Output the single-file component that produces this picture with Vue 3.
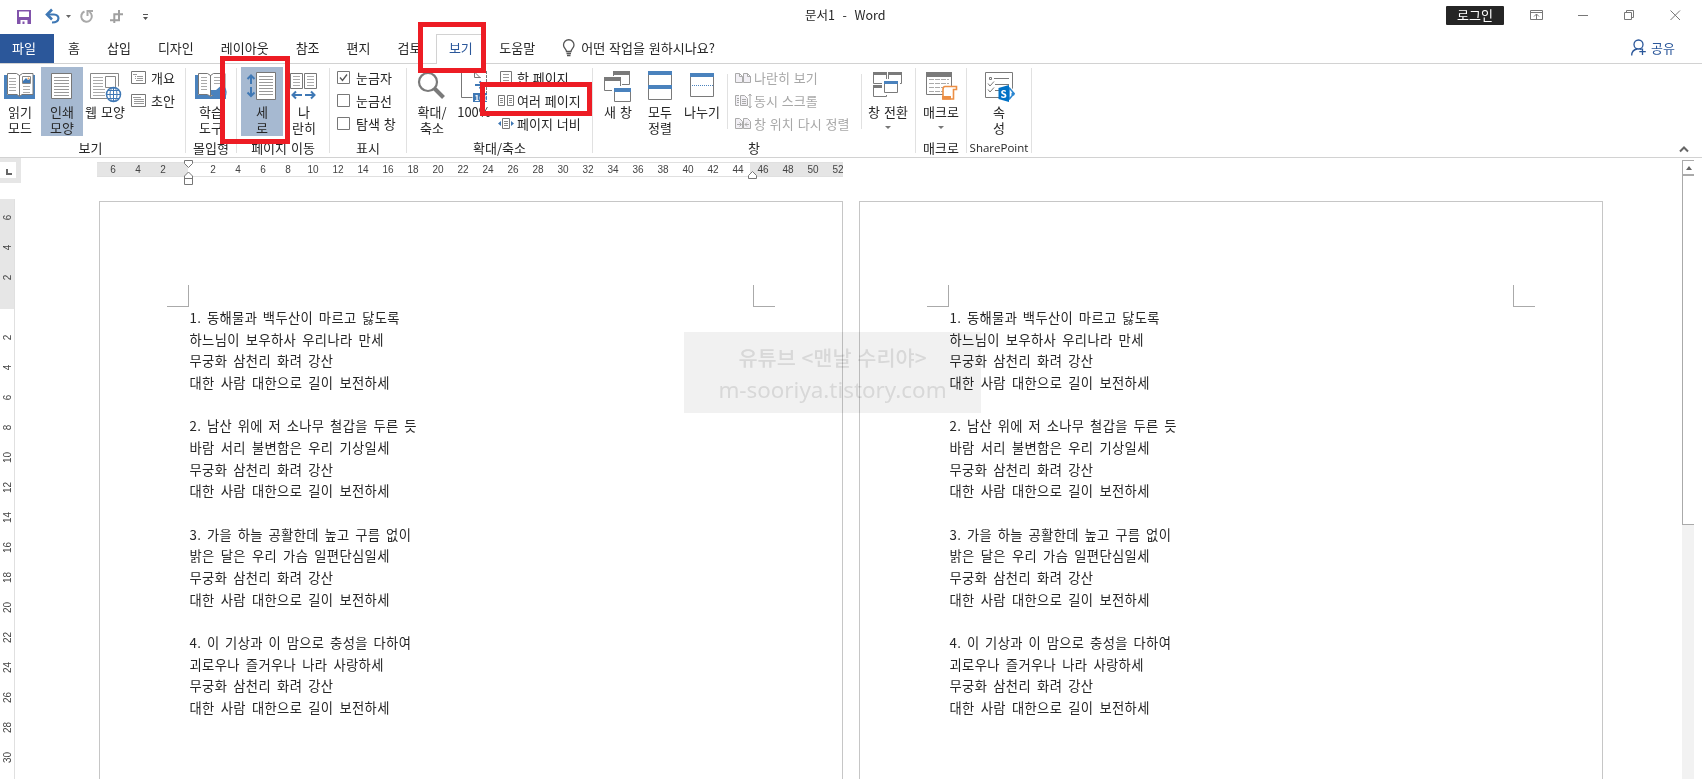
<template>
  <div class="word">
    <header class="titlebar">
      <div class="quick-access">
        <svg width="160" height="31" viewBox="0 0 160 31">
          <path d="M17 10h14v14h-14z" fill="#8153ab" />
          <path d="M19 11.500h10v5.500h-10zM20.500 20h7v4h-7z" fill="#fff" />
          <path d="M22.500 21.500h2v2.500h-2z" fill="#8153ab" />
          <path d="M48 14.500h6c6 0 6.500 8-2 8" fill="none" stroke="#3f78b5" stroke-width="2.200" />
          <path d="M52 9.500l-5 5 5 5" fill="none" stroke="#3f78b5" stroke-width="2.600" />
          <path d="M66 15h5l-2.500 3z" fill="#666" />
          <path d="M84.500 11.500a5.300 5.300 0 1 0 5 0.500M87.500 16v-5h5.500" fill="none" stroke="#a9a9a9" stroke-width="2" />
          <path d="M119 10v11M113.300 14.300h9.700M110 20.200h10M114.300 14v9" fill="none" stroke="#a0a0a0" stroke-width="2" />
          <path d="M143 14h5v1h-5zM143 17h5l-2.500 3z" fill="#555" />
        </svg>
      </div>
      <div class="doc-title">{{ title }}</div>
      <div class="login">로그인</div>
      <svg class="window-controls" width="198" height="31" viewBox="1504 0 198 31" fill="none" stroke="#777">
        <path d="M1530.500 10.500h12v9h-12zM1530 12.500h13M1536.500 19v-5M1534 16.500l2.500-2.500 2.500 2.500" />
        <path d="M1578 15.500h10" />
        <path d="M1624.500 12.500h7v7h-7zM1626.500 12v-1.500h7v7h-2" />
        <path d="M1670.500 10.500l9.500 9.500M1680 10.500l-9.500 9.500" />
      </svg>
    </header>

    <nav class="tabs">
      <span class="file-tab">파일</span>
      <span v-for="tab in tabs" :key="tab" class="tab" :class="{ active: tab === '보기' }">{{ tab }}</span>
      <span class="tell-me">
        <svg width="14" height="18" viewBox="0 0 14 18" fill="none" stroke="#555" stroke-width="1.300">
          <path d="M4.500 12.500c0-2.500-3-3.500-3-6.500a5.200 5.200 0 0 1 10.500 0c0 3-3 4-3 6.500zM4.500 14.500h4.500M5 16.500h3.500" />
        </svg>
        어떤 작업을 원하시나요?
      </span>
      <span class="share">
        <svg width="16" height="17" viewBox="0 0 16 17" fill="none" stroke="#2b579a" stroke-width="1.300">
          <circle cx="7.500" cy="5.500" r="4.500" />
          <path d="M0.700 16.500c0-4 2.500-6 5.500-6.500M9 9.800l1.500 1M11.500 9.500v6.500M8.300 12.700h6.500" />
        </svg>
        공유
      </span>
    </nav>

    <section class="ribbon">
      <div class="group views">
        <div class="body">
          <div class="big w40">
            <svg width="40" height="37" viewBox="0 67 40 37">
              <path d="M4 75h3v20h26v-20h2v24h-31z" fill="#4a82bd" />
              <path d="M7.500 73.500h9l3 2 3-2h10.500v21h-11l-2.500 2-2.500-2h-9.500z" fill="#fff" stroke="#777" />
              <path d="M19.500 75v21" stroke="#777" />
              <path d="M9 78.500h7M9 81.500h7M9 84.500h7M9 87.500h7M9 90.500h7M23 86.500h7M23 89.500h7M23 92.500h7" stroke="#aaa" />
              <path d="M22.500 76.500h8v7h-8z" fill="#fff" stroke="#888" />
              <path d="M23 83v-2l3-3 2 2 2-1v4z" fill="#3f78b5" />
              <circle cx="28.500" cy="78.500" r="1" fill="#f0a860" />
            </svg>
            읽기<br>모드
          </div>
          <div class="big w42 selected">
            <svg width="42" height="37" viewBox="41 67 42 37">
              <path d="M51.500 73.500h20v25h-20z" fill="#fff" stroke="#777" />
              <path d="M54 77.500h15M54 80.500h15M54 83.500h15M54 86.500h15M54 89.500h15M54 92.500h15M54 95.500h15" stroke="#999" />
            </svg>
            인쇄<br>모양
          </div>
          <div class="big w44">
            <svg width="44" height="37" viewBox="83 67 44 37">
              <path d="M107 98.500h-16.500v-25h28v13" fill="#fff" stroke="#888" />
              <path d="M105.500 76.500h10v11h-10z" fill="none" stroke="#888" />
              <path d="M93 77.500h10M93 80.500h10M93 83.500h10M93 86.500h10M93 89.500h12M93 92.500h12M93 95.500h12" stroke="#aaa" />
              <circle cx="113.500" cy="94.500" r="7" fill="#fff" stroke="#3f78b5" stroke-width="1.500" />
              <path d="M106.500 94.500h14M113.500 87.500v14M108 90.500h11M108 98.500h11" stroke="#3f78b5" fill="none" />
              <ellipse cx="113.500" cy="94.500" rx="3.500" ry="7" fill="none" stroke="#3f78b5" />
            </svg>
            웹 모양
          </div>
          <div class="small-list view-list">
            <div class="small">
              <svg width="15" height="13" viewBox="0 0 15 13" fill="none" stroke="#777">
                <path d="M.5.500h14v12h-14z" />
                <path d="M2 3.500h4M4 5.500h1M6 5.500h6M4 7.500h1M6 7.500h6M5 9.500h7" stroke="#999" />
              </svg>
              개요
            </div>
            <div class="small">
              <svg width="15" height="13" viewBox="0 0 15 13" fill="none" stroke="#777">
                <path d="M.5.500h14v12h-14z" />
                <path d="M2 3.500h8M3 5.500h10M3 7.500h10M3 9.500h10" stroke="#999" />
              </svg>
              초안
            </div>
          </div>
        </div>
        <div class="label">보기</div>
      </div>
      <div class="sep"></div>

      <div class="group immersive">
        <div class="body">
          <div class="big w50">
            <svg width="50" height="37" viewBox="186 67 50 37">
              <path d="M195 75h3v20h28v4h-31z" fill="#4a82bd" />
              <path d="M198.500 73.500h9l3 2 3-2h11.500v21h-11l-3.500 2-3-2h-9z" fill="#fff" stroke="#777" />
              <path d="M210.500 75v21" stroke="#777" />
              <path d="M201 77.500h6M201 80.500h6M201 83.500h6M201 86.500h6M201 89.500h6M214 77.500h7M214 80.500h7M214 83.500h7" stroke="#aaa" />
              <path d="M211 90h5l7-6v17l-7-6h-5z" fill="#4a82bd" />
              <path d="M224 87q4 5.500 0 11" stroke="#4a82bd" fill="none" stroke-width="1.500" />
            </svg>
            학습<br>도구
          </div>
        </div>
        <div class="label">몰입형</div>
      </div>
      <div class="sep"></div>

      <div class="group movement">
        <div class="body">
          <div class="big w42 selected">
            <svg width="42" height="37" viewBox="241 67 42 37">
              <path d="M256.500 72.500h19v27h-19z" fill="#fff" stroke="#777" />
              <path d="M259 76.500h14M259 79.500h14M259 82.500h14M259 85.500h14M259 88.500h14M259 91.500h14M259 94.500h14" stroke="#999" />
              <path d="M251 84v-8M247.500 79l3.500-3.500 3.500 3.500M251 87v8.500M247.500 92.500l3.500 3.500 3.500-3.500" fill="none" stroke="#3f78b5" stroke-width="2" />
            </svg>
            세<br>로
          </div>
          <div class="big w42">
            <svg width="42" height="37" viewBox="283 67 42 37">
              <path d="M290.500 73.500h12v15h-12zM304.500 73.500h12v15h-12z" fill="#fff" stroke="#777" />
              <path d="M293 76.500h7M293 79.500h7M293 82.500h7M293 85.500h7M307 76.500h7M307 79.500h7M307 82.500h7M307 85.500h7" stroke="#aaa" />
              <path d="M302 95h-9M296 91.500l-3.500 3.500 3.500 3.500M305 95h9M311 91.500l3.500 3.500-3.500 3.500" fill="none" stroke="#3f78b5" stroke-width="2" />
            </svg>
            나<br>란히
          </div>
        </div>
        <div class="label">페이지 이동</div>
      </div>
      <div class="sep"></div>

      <div class="group show">
        <div class="body">
          <div class="small-list">
            <div v-for="item in showItems" :key="item.name" class="small check">
              <svg width="13" height="13" viewBox="0 0 13 13" fill="none">
                <path d="M.5.500h12v12h-12z" stroke="#777" />
                <path v-if="item.checked" d="M3 6.500l2.500 3 4.500-6" stroke="#555" stroke-width="1.300" />
              </svg>
              {{ item.name }}
            </div>
          </div>
        </div>
        <div class="label">표시</div>
      </div>
      <div class="sep"></div>

      <div class="group zoom">
        <div class="body">
          <div class="big w42">
            <svg width="42" height="37" viewBox="411 67 42 37" fill="none" stroke="#7a7a7a">
              <circle cx="428" cy="82" r="9" stroke-width="2.200" />
              <path d="M434.500 88.500l9 9" stroke-width="4" />
            </svg>
            확대/<br>축소
          </div>
          <div class="big w42">
            <svg width="42" height="37" viewBox="453 67 42 37" fill="none">
              <path d="M461.500 73v24.500h11" stroke="#777" />
              <path d="M486.500 71v22" stroke="#777" stroke-dasharray="3 1" />
              <path d="M474.500 72v5.500h6M474.500 72l6 6" stroke="#777" />
              <path d="M475 85h7M479.500 81.500l3.500 3.500-3.500 3.500" stroke="#3f78b5" stroke-width="2" />
              <path d="M473 93h14v9h-14z" fill="#3f78b5" />
              <text x="474.500" y="100.500" font-size="8" font-weight="bold" fill="#fff">100</text>
            </svg>
            100%
          </div>
          <div class="small-list">
            <div class="small">
              <svg width="17" height="14" viewBox="0 0 17 14" fill="none" stroke="#777">
                <path d="M2.500.500h11v15h-11z" />
                <path d="M5 3.500h6M5 6.500h6M5 9.500h6" stroke="#999" />
              </svg>
              한 페이지
            </div>
            <div class="small">
              <svg width="17" height="12" viewBox="0 0 17 12" fill="none" stroke="#777">
                <path d="M.5.500h6v10h-6zM9.500.500h6v10h-6z" />
                <path d="M2 3.500h3M2 5.500h3M2 7.500h3M11 3.500h3M11 5.500h3M11 7.500h3" stroke="#888" />
              </svg>
              여러 페이지
            </div>
            <div class="small">
              <svg width="17" height="12" viewBox="0 0 17 12" fill="none" stroke="#777">
                <path d="M4.500.500h7v10h-7z" />
                <path d="M6 3.500h4M6 5.500h4M6 7.500h4" stroke="#888" />
                <path d="M3 3v5l-3-2.500zM13 3v5l3-2.500z" fill="#3f78b5" stroke="none" />
              </svg>
              페이지 너비
            </div>
          </div>
        </div>
        <div class="label">확대/축소</div>
      </div>
      <div class="sep"></div>

      <div class="group window">
        <div class="body">
          <div class="big w42">
            <svg width="42" height="37" viewBox="597 67 42 37" fill="#fff" stroke="#7a7a7a">
              <path d="M613.500 71.500h16v13h-16z" />
              <path d="M613 71h17v4h-17z" fill="#7a7a7a" stroke="none" />
              <path d="M603 76h19v16h-19z" stroke="none" />
              <path d="M604.500 77.500h16v13h-16z" />
              <path d="M604 77h17v4h-17z" fill="#7a7a7a" stroke="none" />
              <path d="M612 86h20v17h-20z" stroke="none" />
              <path d="M614.500 88.500h16v13h-16z" />
              <path d="M614 88h17v4h-17z" fill="#4a82bd" stroke="none" />
            </svg>
            새 창
          </div>
          <div class="big w42">
            <svg width="42" height="37" viewBox="639 67 42 37" fill="#fff" stroke="#7a7a7a">
              <path d="M648.500 71.500h23v28h-23z" />
              <path d="M648 71h24v4h-24zM648 85h24v4h-24z" fill="#4a82bd" stroke="none" />
            </svg>
            모두<br>정렬
          </div>
          <div class="big w42">
            <svg width="42" height="37" viewBox="681 67 42 37" fill="#fff" stroke="#7a7a7a">
              <path d="M690.500 73.500h23v23h-23z" />
              <path d="M690 73h24v4h-24z" fill="#4a82bd" stroke="none" />
              <path d="M692 85.500h21" stroke="#4a82bd" stroke-dasharray="1 1" />
            </svg>
            나누기
          </div>
          <div class="inner-sep"></div>
          <div class="small-list disabled">
            <div class="small">
              <svg width="17" height="12" viewBox="0 0 17 12" fill="#f2f0f5" stroke="#aaa">
                <path d="M.5 1.500h4l3 3v6h-7zM8.500 1.500h4l3 3v6h-7zM4.500 1.500v3h3M12.500 1.500v3h3" />
              </svg>
              나란히 보기
            </div>
            <div class="small">
              <svg width="17" height="14" viewBox="0 0 17 14" fill="#f2f0f5" stroke="#aaa">
                <path d="M4 1.500h-3.500v10h3.500M5.500 1.500h4l3 3v7h-7z" />
                <path d="M2 4.500h2M2 6.500h2M2 8.500h2M7 5.500h4M7 7.500h4M7 9.500h4" />
                <path d="M15 0v14M13.500 2l1.500-2 1.500 2M13.500 12l1.500 2 1.500-2" fill="none" />
              </svg>
              동시 스크롤
            </div>
            <div class="small">
              <svg width="17" height="12" viewBox="0 0 17 12" fill="#f2f0f5" stroke="#aaa">
                <path d="M.5.500h4l3 3v7h-7zM8.500.500h4l3 3v7h-7z" />
                <path d="M2 6.500h4M4.500 4.500l2 2-2 2M10 6.500h4M12 4.500l-2 2 2 2" fill="none" />
              </svg>
              창 위치 다시 정렬
            </div>
          </div>
          <div class="inner-sep second"></div>
          <div class="big w52">
            <svg width="52" height="37" viewBox="862 67 52 37" fill="#fff" stroke="#7a7a7a">
              <path d="M873.500 72.500h13v11h-13zM888.500 72.500h13v11h-13zM873.500 85.500h13v11h-13z" />
              <path d="M873 72h14v3h-14zM888 72h14v3h-14zM873 85h14v3h-14z" fill="#7a7a7a" stroke="none" />
              <path d="M882 79h18v16h-18z" stroke="none" />
              <path d="M884.500 81.500h13v11h-13z" />
              <path d="M884 81h14v3h-14z" fill="#4a82bd" stroke="none" />
            </svg>
            창 전환
            <i class="arrow"></i>
          </div>
        </div>
        <div class="label">창</div>
      </div>
      <div class="sep"></div>

      <div class="group macro">
        <div class="body">
          <div class="big w50">
            <svg width="50" height="37" viewBox="916 67 50 37" fill="#fff" stroke="#7a7a7a">
              <path d="M926.500 72.500h25v22h-25z" />
              <path d="M926 72h26v5h-26z" fill="#7a7a7a" stroke="none" />
              <path d="M929 79.500h20M929 83.500h20M929 87.500h14M929 91.500h14" stroke="#aaa" stroke-dasharray="5 1" />
              <path d="M945 86.500h11.500v3h-3v9.500h-10.500v-9.500c0-2 1-3 2-3z" stroke="#ec8f45" stroke-width="1.600" />
              <path d="M942 96h9v3.500h-9z" fill="#ec8f45" stroke="none" />
            </svg>
            매크로
            <i class="arrow"></i>
          </div>
        </div>
        <div class="label">매크로</div>
      </div>
      <div class="sep"></div>

      <div class="group sharepoint">
        <div class="body">
          <div class="big w64">
            <svg width="64" height="37" viewBox="967 67 64 37" fill="#fff" stroke="#7a7a7a">
              <path d="M985.500 72.500h27v25h-27z" />
              <path d="M989.500 77.500h2v2h-2zM994 78.500h15M995 84.500h14M995 90.500h6M988 83.500l2 2.500 4-4.500M988 89.500l2 2.500 4-4.500" fill="none" />
              <path d="M1005 86h6l4.500 8-4.500 7h-6z" stroke="none" />
              <path d="M1009 87.500l5 6-5 6M1009 87.500v12" fill="none" stroke="#2a86d1" stroke-width="1.500" />
              <circle cx="1013" cy="94" r="1.700" fill="#2a86d1" stroke="none" />
              <path d="M998.500 88l10.500-3v17l-10.500-3z" fill="#0072c6" stroke="none" />
              <text x="1000.500" y="97.500" font-size="10" font-weight="bold" fill="#fff" stroke="none">S</text>
            </svg>
            속<br>성
          </div>
        </div>
        <div class="label latin">SharePoint</div>
      </div>
      <div class="sep"></div>
      <svg class="collapse" width="10" height="7" viewBox="0 0 10 7" fill="none" stroke="#666" stroke-width="2">
        <path d="M1 5.500l4-4 4 4" />
      </svg>
    </section>

    <main class="workspace">
      <aside class="left">
        <div class="corner">
          <div class="tab-stop">
            <svg width="6" height="6" viewBox="0 0 6 6"><path d="M1 0v5h5" fill="none" stroke="#666" stroke-width="2" /></svg>
          </div>
        </div>
        <div class="v-ruler">
          <span v-for="(n, i) in vTicks" :key="i"><b>{{ n }}</b></span>
        </div>
      </aside>

      <div class="center">
        <div class="h-ruler">
          <div class="ticks">
            <span v-for="(n, i) in hTicks" :key="i">{{ n }}</span>
          </div>
          <svg class="marker left-marker" width="11" height="26" viewBox="0 0 11 26" fill="#fff" stroke="#777">
            <path d="M.5.500h8v3l-4 4-4-4zM.5 24.500v-8.500l4-4 4 4v8.500zM.5 18.500h8" />
          </svg>
          <svg class="marker right-marker" width="11" height="9" viewBox="0 0 11 9" fill="#fff" stroke="#777">
            <path d="M.5 7.500v-3l4-4 4 4v3z" />
          </svg>
        </div>

        <div class="pages">
          <article v-for="p in 2" :key="p" class="page">
            <div class="marks"><i class="mark tl"></i><i class="mark tr"></i></div>
            <div class="text">
              <p v-for="(line, i) in lines" :key="i" :class="{ numbered: i % 5 === 0 }">{{ line }}</p>
            </div>
          </article>
        </div>
      </div>

      <div class="scrollbar">
        <div class="up"><i></i></div>
        <div class="thumb"></div>
      </div>
    </main>

    <div class="watermark">
      <div>유튜브 &lt;맨날 수리야&gt;</div>
      <div class="site">m-sooriya.tistory.com</div>
    </div>
    <div class="highlight on-tab"></div>
    <div class="highlight on-vertical"></div>
    <div class="highlight on-pages"></div>
  </div>
</template>

<script setup>
const title = '문서1  -  Word';

const tabs = ['홈', '삽입', '디자인', '레이아웃', '참조', '편지', '검토', '보기', '도움말'];

const showItems = [
  { name: '눈금자', checked: true },
  { name: '눈금선', checked: false },
  { name: '탐색 창', checked: false },
];

// Ruler numbers count outwards from the page margin
const ticks = (last) => {
  const list = [6, 4, 2, ''];
  for (let n = 2; n <= last; n += 2) list.push(n);
  return list;
};
const hTicks = ticks(52);
const vTicks = ticks(30);

const lines = [
  '1. 동해물과 백두산이 마르고 닳도록',
  '하느님이 보우하사 우리나라 만세',
  '무궁화 삼천리 화려 강산',
  '대한 사람 대한으로 길이 보전하세',
  '',
  '2. 남산 위에 저 소나무 철갑을 두른 듯',
  '바람 서리 불변함은 우리 기상일세',
  '무궁화 삼천리 화려 강산',
  '대한 사람 대한으로 길이 보전하세',
  '',
  '3. 가을 하늘 공활한데 높고 구름 없이',
  '밝은 달은 우리 가슴 일편단심일세',
  '무궁화 삼천리 화려 강산',
  '대한 사람 대한으로 길이 보전하세',
  '',
  '4. 이 기상과 이 맘으로 충성을 다하여',
  '괴로우나 즐거우나 나라 사랑하세',
  '무궁화 삼천리 화려 강산',
  '대한 사람 대한으로 길이 보전하세',
];
</script>

<style>
body {
  margin: 0;
  overflow: hidden;
}
</style>

<style scoped>
.word {
  position: relative;
  display: flex;
  flex-direction: column;
  width: 1702px;
  height: 779px;
  overflow: hidden;
  background: #fff;
  color: #262626;
  font-family: "Noto Sans CJK KR", sans-serif;
  font-size: 13px;
  word-spacing: 1px;
}

svg {
  display: block;
  flex: none;
}

.titlebar {
  display: flex;
  height: 34px;
  flex: none;
}

.quick-access {
  width: 805px;
}

.doc-title {
  white-space: pre;
  line-height: 30px;
  font-size: 12.5px;
}

.login {
  width: 58px;
  height: 19px;
  margin: 6px 0 0 auto;
  background: #252525;
  border-radius: 1px;
  color: #fff;
  line-height: 18px;
  text-align: center;
}

.tabs {
  display: flex;
  height: 29px;
  flex: none;
  gap: 3px;
  border-bottom: 1px solid #d2d2d2;
  line-height: 27px;
}

.file-tab {
  width: 42px;
  padding-left: 12px;
  margin-right: -1px;
  background: #2b579a;
  color: #fff;
}

.tab {
  padding: 0 12px;
}

.tab.active {
  height: 29px;
  padding: 0 10.5px 0 11.5px;
  border: 1px solid #d2d2d2;
  border-bottom: 0;
  margin-bottom: -1px;
  background: #fff;
  color: #2b579a;
  line-height: 25px;
}

.tell-me,
.share {
  display: flex;
  align-items: center;
  height: 27px;
  white-space: nowrap;
}

.tell-me {
  gap: 5px;
  margin-left: 12px;
}

.share {
  gap: 4px;
  margin-left: auto;
  margin-right: 27px;
  color: #2b579a;
}

.ribbon {
  display: flex;
  box-sizing: border-box;
  height: 94px;
  flex: none;
  padding-top: 3px;
  border-bottom: 1px solid #d2d2d2;
}

.group {
  flex: none;
}

.views { width: 185px; }
.immersive { width: 50px; }
.movement { width: 92px; }
.show { width: 76px; }
.zoom { width: 185px; }
.window { width: 322px; }
.macro { width: 50px; }
.sharepoint { width: 64px; }

.sep {
  width: 1px;
  height: 85px;
  margin-top: 1px;
  background: #e1e1e1;
}

.body {
  display: flex;
  height: 69px;
}

.label {
  margin-top: 2px;
  line-height: 20px;
  text-align: center;
  white-space: nowrap;
}

.views .label {
  padding-right: 4px;
}

.latin {
  font-family: "Open Sans", sans-serif;
  font-size: 11.500px;
}

.big {
  flex: none;
  height: 69px;
  line-height: 16px;
  text-align: center;
  white-space: nowrap;
}

.selected {
  background: #a6b9d1;
}

.w40 { width: 40px; margin-right: 1px; }
.w42 { width: 42px; }
.w44 { width: 44px; }
.w50 { width: 50px; }
.w52 { width: 52px; }
.w64 { width: 64px; }

.movement .body { padding-left: 4px; }
.show .body { padding-left: 7px; }
.zoom .body { padding-left: 4px; }
.window .body { padding-left: 4px; }

.small-list {
  margin-top: -1px;
}

.view-list {
  padding-left: 4px;
}

.zoom .small-list {
  padding-left: 3px;
}

.small {
  display: flex;
  align-items: center;
  gap: 5px;
  height: 23px;
  white-space: nowrap;
}

.zoom .small,
.disabled .small {
  gap: 2px;
}

.check {
  gap: 6px;
}

.disabled {
  width: 126px;
  color: #a8a8a8;
}

.inner-sep {
  width: 1px;
  height: 55px;
  margin: 7px 7px 0 4px;
  background: #e1e1e1;
}

.inner-sep.second {
  margin: 7px 0 0 0;
}

.arrow {
  display: block;
  width: 0;
  margin: 6px auto 0;
  border: 3px solid transparent;
  border-top: 3px solid #777;
  border-bottom: 0;
}

.collapse {
  margin: 79px 13px 0 auto;
}

.workspace {
  display: flex;
  flex: 1;
  min-height: 0;
}

.left {
  display: flex;
  flex-direction: column;
  width: 97px;
  flex: none;
}

.corner {
  width: 21px;
  height: 21px;
  padding-top: 4px;
  flex: none;
  background: #e6e6e6;
}

.tab-stop {
  width: 10px;
  height: 9px;
  padding: 7px 0 0 6px;
  background: #fff;
}

.v-ruler {
  box-sizing: border-box;
  width: 15px;
  flex: 1;
  min-height: 0;
  margin-top: 16px;
  padding: 3px 0 0 1px;
  overflow: hidden;
  border-right: 1px solid #e0e0e0;
  background: linear-gradient(#e6e6e6 110px, #fff 110px);
}

.v-ruler span {
  display: flex;
  align-items: center;
  justify-content: center;
  height: 30px;
}

.v-ruler b {
  transform: rotate(-90deg);
  font: 10px "Liberation Sans", sans-serif;
  color: #444;
}

.center {
  flex: 1;
  min-width: 0;
}

.h-ruler {
  position: relative;
  width: 746px;
  height: 15px;
  margin-top: 4px;
}

.ticks {
  display: flex;
  box-sizing: border-box;
  height: 15px;
  padding-left: 3.500px;
  overflow: hidden;
  border-top: 1px solid #e0e0e0;
  border-bottom: 1px solid #e0e0e0;
  background: linear-gradient(90deg, #e5e5e5 91px, #fff 91px, #fff 653px, #e5e5e5 653px);
  color: #444;
  font: 10px/14px "Liberation Sans", sans-serif;
}

.ticks span {
  width: 25px;
  flex: none;
  text-align: center;
}

.marker {
  position: absolute;
}

.left-marker {
  left: 87px;
  top: -2px;
}

.right-marker {
  left: 651px;
  top: 9px;
}

.pages {
  display: flex;
  gap: 16px;
  padding: 24px 0 0 2px;
}

.page {
  box-sizing: border-box;
  width: 744px;
  height: 1052px;
  flex: none;
  border: 1px solid #c6c6c6;
}

.marks {
  display: flex;
  justify-content: space-between;
  padding: 83px 67px 0;
}

.mark {
  box-sizing: border-box;
  width: 22px;
  height: 22px;
  border-bottom: 1px solid #aaa;
}

.tl { border-right: 1px solid #aaa; }
.tr { border-left: 1px solid #aaa; }

.text {
  padding-left: 89.500px;
  font-size: 13.300px;
  letter-spacing: 0.350px;
  word-spacing: 2.700px;
}

.text p {
  height: 21.670px;
  margin: 0;
  line-height: 21.670px;
  white-space: nowrap;
}

.text .numbered {
  word-spacing: 2.300px;
}

.scrollbar {
  width: 12px;
  margin: 2px 8px 0 0;
  background: #f2f2f2;
}

.up {
  display: flex;
  box-sizing: border-box;
  height: 14px;
  padding: 5px 0 0 3px;
  border: 1px solid #aaa;
  border-width: 1px 0 0 1px;
  background: #fff;
}

.up i {
  height: 0;
  border: 3.500px solid transparent;
  border-bottom: 4px solid #666;
  border-top: 0;
}

.thumb {
  box-sizing: border-box;
  height: 351px;
  border: 1px solid #aaa;
  border-width: 2px 0 1px 1px;
  background: #fff;
}

.watermark {
  position: absolute;
  left: 684px;
  top: 332px;
  width: 297px;
  height: 76px;
  padding-top: 5px;
  background: rgba(238, 238, 238, 0.8);
  mix-blend-mode: multiply;
  color: #d8d8d8;
  font-size: 20.800px;
  font-weight: 500;
  line-height: 40px;
  text-align: center;
  white-space: nowrap;
}

.site {
  margin-top: -7px;
  font-family: "Noto Sans", sans-serif;
  font-size: 22.400px;
  font-weight: 400;
}

.highlight {
  position: absolute;
  box-sizing: border-box;
  border: 5px solid #ed1c24;
}

.on-tab {
  left: 418px;
  top: 22px;
  width: 68px;
  height: 51px;
}

.on-vertical {
  left: 220px;
  top: 56px;
  width: 70px;
  height: 88px;
}

.on-pages {
  left: 480px;
  top: 82px;
  width: 112px;
  height: 34px;
}
</style>
